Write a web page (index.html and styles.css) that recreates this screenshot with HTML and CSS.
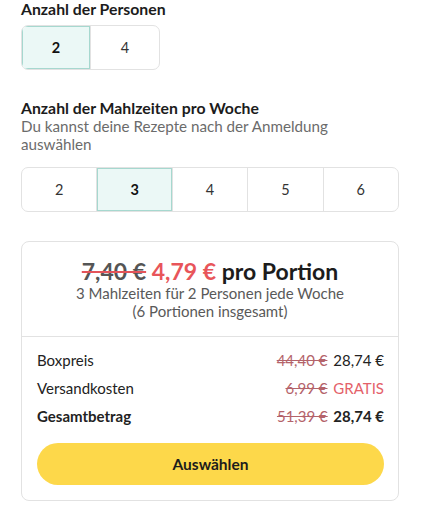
FILE: index.html
```html
<!DOCTYPE html>
<html lang="de">
<head>
  <meta charset="UTF-8" />
  <meta name="viewport" content="width=device-width, initial-scale=1.0"/>
  <title>Box wählen</title>
  <link rel="stylesheet" href="styles.css">
</head>
<body>
  <div class="plan">
    <div class="section">
      <h2>Anzahl der Personen</h2>
      <div class="options people">
        <div class="option active">2</div>
        <div class="option">4</div>
      </div>
    </div>

    <div class="section meals-section">
      <h2>Anzahl der Mahlzeiten pro Woche</h2>
      <p class="hint">Du kannst deine Rezepte nach der Anmeldung auswählen</p>
      <div class="options meals">
        <div class="option">2</div>
        <div class="option active">3</div>
        <div class="option">4</div>
        <div class="option">5</div>
        <div class="option">6</div>
      </div>
    </div>

    <div class="summary">
      <div class="summary-head">
        <div class="portion">
          <s class="old">7,40 €</s> <span class="new">4,79 €</span> pro Portion
        </div>
        <p>3 Mahlzeiten für 2 Personen jede Woche<br>(6 Portionen insgesamt)</p>
      </div>
      <div class="summary-body">
        <div class="row">
          <span>Boxpreis</span>
          <span><s>44,40 €</s> 28,74 €</span>
        </div>
        <div class="row">
          <span>Versandkosten</span>
          <span><s>6,99 €</s> <span class="free">GRATIS</span></span>
        </div>
        <div class="row total">
          <span>Gesamtbetrag</span>
          <span><s>51,39 €</s> 28,74 €</span>
        </div>
        <button class="choose">Auswählen</button>
      </div>
    </div>
  </div>
</body>
</html>
```

FILE: styles.css
```css
body {
  margin: 0;
  font-family: 'Lato', sans-serif;
  color: #1c1c1c;
  background: white;
}
.plan {
  padding: 0 25px 0 21px;
}
.section h2 {
  margin: 0;
  font-size: 15.8px;
  font-weight: bold;
  line-height: 18px;
}
.meals-section {
  margin-top: 29px;
}
.hint {
  margin: 0;
  color: #6b6b6b;
  font-size: 15.2px;
  line-height: 18px;
  width: 340px;
}
.options {
  display: flex;
  border: 1px solid #e2e2e2;
  border-radius: 7px;
  overflow: hidden;
}
.people {
  width: 137px;
  margin-top: 7px;
}
.meals {
  margin-top: 14px;
}
.option {
  flex: 1;
  height: 43px;
  display: flex;
  align-items: center;
  justify-content: center;
  font-size: 14.5px;
  color: #333;
  border-left: 1px solid #e2e2e2;
}
.option:first-child {
  border-left: none;
}
.option.active {
  background: #ebf8f6;
  box-shadow: inset 0 0 0 1px #a6d8cf;
  font-weight: bold;
  color: #111;
}
.summary {
  margin-top: 29px;
  border: 1px solid #e2e2e2;
  border-radius: 8px;
}
.summary-head {
  text-align: center;
  padding: 16px 10px 16px;
  border-bottom: 1px solid #e2e2e2;
}
.portion {
  font-size: 23px;
  font-weight: bold;
  line-height: 26px;
}
.portion .old {
  color: #555;
  text-decoration-color: #e4545a;
  text-decoration-thickness: 2px;
}
.portion .new {
  color: #e8555a;
}
.summary-head p {
  margin: 0;
  font-size: 15px;
  line-height: 18px;
  color: #595959;
}
.summary-body {
  padding: 9px 14px 15px 15px;
}
.row {
  display: flex;
  justify-content: space-between;
  font-size: 15px;
  line-height: 28px;
  color: #222;
}
.row s {
  color: #b4636a;
  margin-right: 2px;
}
.row .free {
  color: #e4616a;
}
.row.total {
  font-weight: bold;
}
.row.total s {
  font-weight: normal;
}
.choose {
  display: block;
  width: 100%;
  height: 42px;
  margin-top: 13px;
  border: none;
  border-radius: 21px;
  background: #fdd84a;
  font-family: inherit;
  font-size: 15.5px;
  font-weight: bold;
  color: #1c1c1c;
}
```
